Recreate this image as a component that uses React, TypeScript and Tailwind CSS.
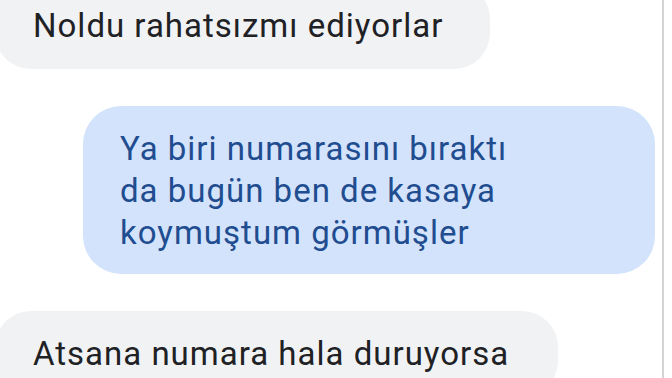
export default function App() {
  return (
    <div className="w-[672px] h-[378px] overflow-hidden bg-white flex font-['Roboto',sans-serif] text-[33px] leading-[42px] tracking-[1px]">
      {/* chat column */}
      <div className="w-[664px] h-full border-r-2 border-[#d4d4d4] flex flex-col gap-[37px]">
        <div className="self-start -mt-[17px] -ml-[5px] w-[495px] whitespace-nowrap rounded-[36px] bg-[#f1f2f4] pl-[38px] py-[22px] text-[#202124]">
          Noldu rahatsızmı ediyorlar
        </div>
        <div className="self-end mr-[7px] w-[572px] whitespace-nowrap rounded-[38px] bg-[#d3e3fc] pl-[37px] pt-[22px] pb-[20px] text-[#1f4d90]">
          Ya biri numarasını bıraktı
          <br />
          da bugün ben de kasaya
          <br />
          koymuştum görmüşler
        </div>
        <div className="self-start -ml-[5px] w-[563px] whitespace-nowrap rounded-[36px] bg-[#f1f2f4] pl-[38px] py-[22px] text-[#202124]">
          Atsana numara hala duruyorsa
        </div>
      </div>
    </div>
  );
}
